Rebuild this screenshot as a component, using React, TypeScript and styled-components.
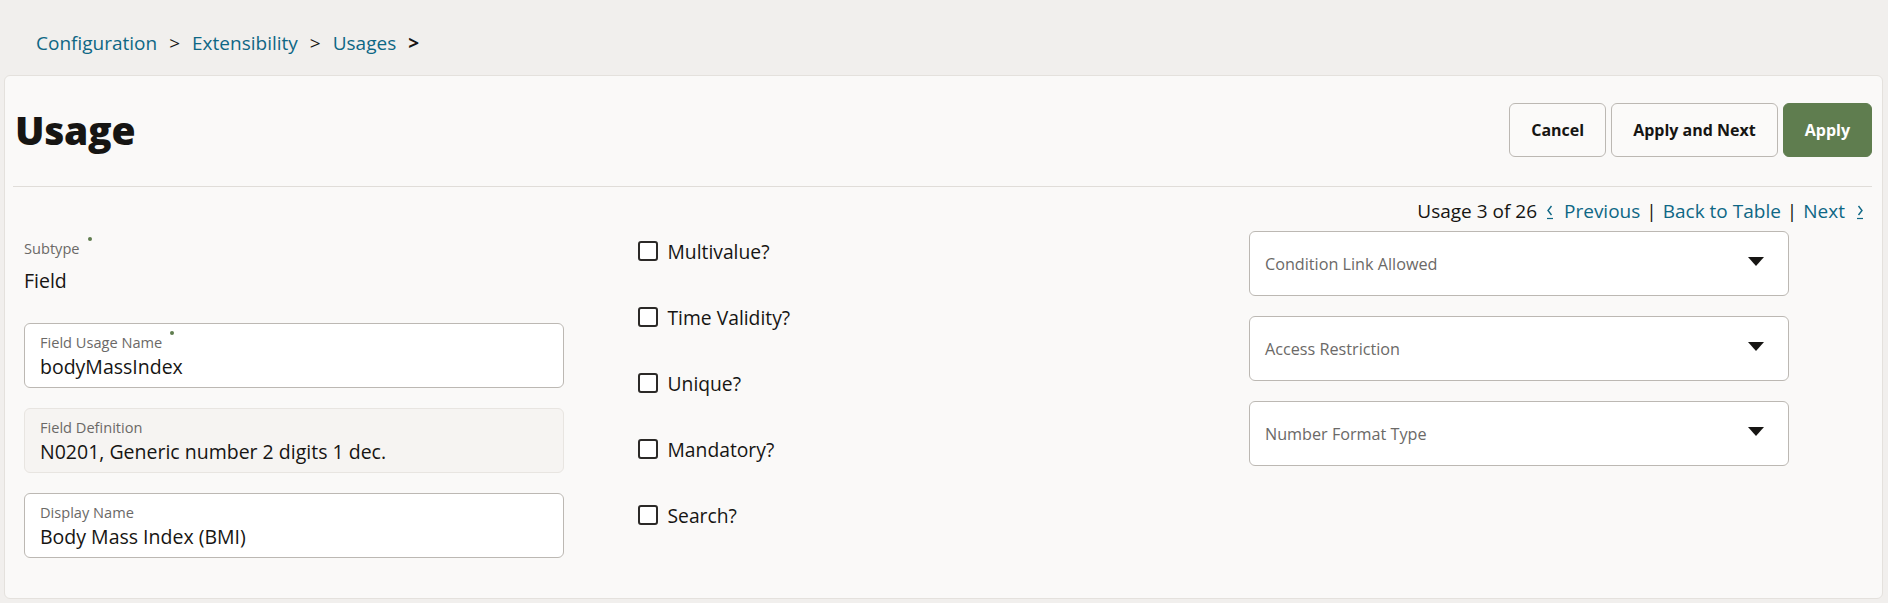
import React from "react";
import styled, { createGlobalStyle } from "styled-components";

const GlobalStyle = createGlobalStyle`
  html, body { margin: 0; padding: 0; }
  body {
    background: #f1efed;
    font-family: "Open Sans", "Noto Sans", Arial, sans-serif;
    color: #161513;
  }
  * { box-sizing: border-box; }
`;

const Page = styled.div`
  width: 1888px;
  min-height: 603px;
  padding: 0 5px 6px 4px;
  background: #f1efed;
`;

const Breadcrumb = styled.nav`
  display: flex;
  align-items: flex-start;
  padding: 30px 0 0 32px;
  height: 75px;
  font-size: 19px;
  line-height: 26px;
`;

const Crumb = styled.a`
  color: #0e6785;
  text-decoration: none;
`;

const CrumbSep = styled.span<{ $last?: boolean }>`
  color: #161513;
  margin: 0 12px;
  font-weight: ${(p) => (p.$last ? 700 : 400)};
`;

const Panel = styled.section`
  background: #faf9f8;
  border: 1px solid #e4e1dd;
  border-radius: 6px;
`;

const Header = styled.header`
  display: flex;
  align-items: center;
  justify-content: space-between;
  padding: 27px 10px 29px 10px;
`;

const Title = styled.h1`
  margin: 0;
  font-size: 39px;
  font-weight: 800;
  line-height: 54px;
  letter-spacing: -0.3px;
`;

const Actions = styled.div`
  display: flex;
  gap: 5px;
`;

const Button = styled.button<{ $primary?: boolean }>`
  height: 54px;
  padding: 0 21px;
  border-radius: 6px;
  font-family: inherit;
  font-size: 16px;
  font-weight: 700;
  cursor: pointer;
  border: 1px solid ${(p) => (p.$primary ? "#5f7d4f" : "#bcb8b3")};
  background: ${(p) => (p.$primary ? "#5f7d4f" : "#fbfaf9")};
  color: ${(p) => (p.$primary ? "#ffffff" : "#161513")};
`;

const Divider = styled.hr`
  margin: 0 10px 0 8px;
  border: 0;
  border-top: 1px solid #e0ddd9;
`;

const NavRow = styled.div`
  display: flex;
  align-items: center;
  justify-content: flex-end;
  height: 44px;
  padding: 3px 18px 0 0;
  font-size: 19px;
  line-height: 26px;
`;

const NavLink = styled.a`
  color: #0e6785;
  text-decoration: none;
  display: inline-flex;
  align-items: center;
`;

const Pipe = styled.span`
  margin: 0 6px;
`;

const ChevronIcon = styled.svg<{ $side: "left" | "right" }>`
  width: 8px;
  height: 18px;
  margin: ${(p) => (p.$side === "left" ? "0 10px 0 9px" : "0 0 0 11px")};
`;

const FormGrid = styled.div`
  display: grid;
  grid-template-columns: repeat(3, 540px);
  column-gap: 72.5px;
  align-items: start;
  padding: 0 0 40px 19px;
`;

const Column = styled.div<{ $gap: number }>`
  display: flex;
  flex-direction: column;
  gap: ${(p) => p.$gap}px;
`;

const StaticField = styled.div`
  padding-top: 6px;
  margin-bottom: 9px;
`;

const LabelText = styled.span<{ $required?: boolean }>`
  position: relative;
  display: inline-block;
  font-size: 14.6px;
  line-height: 20px;
  color: #6b6967;
  ${(p) =>
    p.$required &&
    `
    &::after {
      content: "";
      position: absolute;
      right: -12px;
      top: -1px;
      width: 4px;
      height: 4px;
      border-radius: 50%;
      background: #5f7d4f;
    }
  `}
`;

const StaticValue = styled.div`
  margin-top: 9px;
  font-size: 19.5px;
  line-height: 26px;
`;

const InputBox = styled.div<{ $readonly?: boolean }>`
  height: 65px;
  padding: 7px 15px 0 15px;
  border-radius: 6px;
  border: 1px solid ${(p) => (p.$readonly ? "#e8e5e1" : "#bcb8b3")};
  background: ${(p) => (p.$readonly ? "#f6f4f2" : "#ffffff")};
  display: flex;
  flex-direction: column;
`;

const InputValue = styled.div`
  font-size: 19.5px;
  line-height: 28px;
  color: #161513;
`;

const CheckRow = styled.label`
  display: flex;
  align-items: center;
  gap: 10px;
  height: 40px;
  padding-left: 1px;
  font-size: 19.3px;
  cursor: pointer;
`;

const CheckBox = styled.span`
  width: 20px;
  height: 20px;
  border: 2px solid #2b2927;
  border-radius: 3px;
  background: #ffffff;
  flex: none;
`;

const Select = styled.div`
  height: 65px;
  display: flex;
  align-items: center;
  justify-content: space-between;
  padding: 0 24px 0 15px;
  border: 1px solid #bcb8b3;
  border-radius: 6px;
  background: #ffffff;
  font-size: 16.2px;
  color: #6b6967;
`;

const Caret = styled.svg`
  width: 16px;
  height: 9px;
  margin-top: -5px;
`;

const Chevron = ({ side }: { side: "left" | "right" }) => (
  <ChevronIcon $side={side} viewBox="0 0 8 18">
    {side === "left" ? (
      <path d="M5.5 4 L2 8.5 L5.5 13" fill="none" stroke="#0e6785" strokeWidth="1.4" />
    ) : (
      <path d="M2.5 4 L6 8.5 L2.5 13" fill="none" stroke="#0e6785" strokeWidth="1.4" />
    )}
    <line x1="1" y1="16.5" x2="7" y2="16.5" stroke="#0e6785" strokeWidth="1.2" />
  </ChevronIcon>
);

const checks = ["Multivalue?", "Time Validity?", "Unique?", "Mandatory?", "Search?"];
const selects = ["Condition Link Allowed", "Access Restriction", "Number Format Type"];

export default function App() {
  return (
    <Page>
      <GlobalStyle />
      <Breadcrumb>
        <Crumb href="#">Configuration</Crumb>
        <CrumbSep>&gt;</CrumbSep>
        <Crumb href="#">Extensibility</Crumb>
        <CrumbSep>&gt;</CrumbSep>
        <Crumb href="#">Usages</Crumb>
        <CrumbSep $last>&gt;</CrumbSep>
      </Breadcrumb>
      <Panel>
        <Header>
          <Title>Usage</Title>
          <Actions>
            <Button>Cancel</Button>
            <Button>Apply and Next</Button>
            <Button $primary>Apply</Button>
          </Actions>
        </Header>
        <Divider />
        <NavRow>
          <span>Usage 3 of 26</span>
          <NavLink href="#">
            <Chevron side="left" />
            Previous
          </NavLink>
          <Pipe>|</Pipe>
          <NavLink href="#">Back to Table</NavLink>
          <Pipe>|</Pipe>
          <NavLink href="#">
            Next
            <Chevron side="right" />
          </NavLink>
        </NavRow>
        <FormGrid>
          <Column $gap={20}>
            <StaticField>
              <LabelText $required>Subtype</LabelText>
              <StaticValue>Field</StaticValue>
            </StaticField>
            <InputBox>
              <div>
                <LabelText $required>Field Usage Name</LabelText>
              </div>
              <InputValue>bodyMassIndex</InputValue>
            </InputBox>
            <InputBox $readonly>
              <div>
                <LabelText>Field Definition</LabelText>
              </div>
              <InputValue>N0201, Generic number 2 digits 1 dec.</InputValue>
            </InputBox>
            <InputBox>
              <div>
                <LabelText>Display Name</LabelText>
              </div>
              <InputValue>Body Mass Index (BMI)</InputValue>
            </InputBox>
          </Column>
          <Column $gap={26}>
            {checks.map((c) => (
              <CheckRow key={c}>
                <CheckBox />
                {c}
              </CheckRow>
            ))}
          </Column>
          <Column $gap={20}>
            {selects.map((s) => (
              <Select key={s}>
                <span>{s}</span>
                <Caret viewBox="0 0 16 9">
                  <path d="M0 0 H16 L8 9 Z" fill="#161513" />
                </Caret>
              </Select>
            ))}
          </Column>
        </FormGrid>
      </Panel>
    </Page>
  );
}
